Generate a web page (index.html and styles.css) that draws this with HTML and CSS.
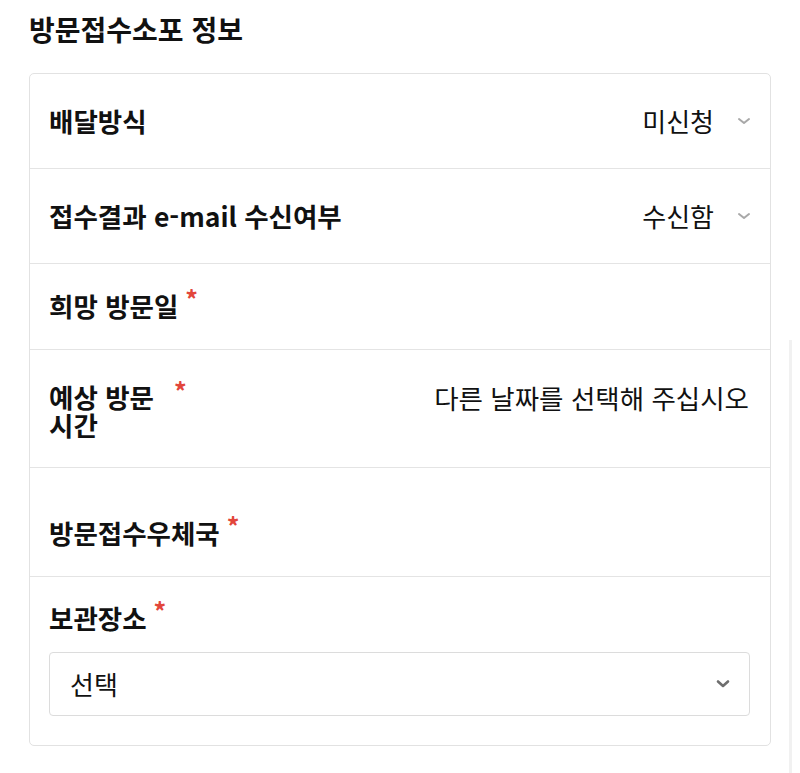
FILE: index.html
```html
<!DOCTYPE html>
<html lang="ko">
<head>
<meta charset="utf-8">
<link rel="stylesheet" href="styles.css">
</head>
<body>
<div class="page">
  <h2 class="title">방문접수소포 정보</h2>
  <div class="card">
    <div class="row row-a">
      <div class="label"><span class="label-text">배달방식</span></div>
      <div class="value">
        <span>미신청</span>
        <svg class="chev" width="14" height="8" viewBox="0 0 14 8"><path d="M2 2 L7 6 L12 2" fill="none" stroke="#a8a8a8" stroke-width="2" stroke-linecap="round" stroke-linejoin="round"/></svg>
      </div>
    </div>
    <div class="row row-a">
      <div class="label"><span class="label-text">접수결과 e-mail 수신여부</span></div>
      <div class="value">
        <span>수신함</span>
        <svg class="chev" width="14" height="8" viewBox="0 0 14 8"><path d="M2 2 L7 6 L12 2" fill="none" stroke="#a8a8a8" stroke-width="2" stroke-linecap="round" stroke-linejoin="round"/></svg>
      </div>
    </div>
    <div class="row row-b">
      <div class="label"><span class="label-text">희망 방문일</span><span class="req">*</span></div>
    </div>
    <div class="row row-c">
      <div class="label"><span class="label-text narrow">예상 방문 시간</span><span class="req">*</span></div>
      <div class="value plain">다른 날짜를 선택해 주십시오</div>
    </div>
    <div class="row row-d">
      <div class="label"><span class="label-text">방문접수우체국</span><span class="req">*</span></div>
    </div>
    <div class="row row-e">
      <div class="label"><span class="label-text">보관장소</span><span class="req">*</span></div>
      <div class="select">
        <span>선택</span>
        <svg class="sel-chev" width="16" height="10" viewBox="0 0 16 10"><path d="M3 2.5 L8 7 L13 2.5" fill="none" stroke="#6e6e6e" stroke-width="2.6" stroke-linecap="round" stroke-linejoin="round"/></svg>
      </div>
    </div>
  </div>
</div>
<div class="scroll-track"></div>
</body>
</html>
```

FILE: styles.css
```css
html, body {
  margin: 0;
  padding: 0;
  background: #ffffff;
}
body {
  font-family: "Noto Sans CJK KR", "Noto Sans", sans-serif;
  color: #111111;
  width: 800px;
  height: 773px;
  overflow: hidden;
}
.page {
  padding: 0 29px 0 29px;
}
.title {
  margin: 0;
  padding: 11px 0 0 0;
  font-size: 28px;
  line-height: 36px;
  font-weight: 700;
  height: 62px;
  box-sizing: border-box;
}
.card {
  border: 1px solid #e2e2e2;
  border-radius: 5px;
  margin-top: 11px;
}
.row {
  display: flex;
  justify-content: space-between;
  align-items: center;
  padding: 0 20px 0 19px;
  border-bottom: 1px solid #e4e4e4;
}
.row:last-child {
  border-bottom: none;
}
.row-a {
  padding-top: 32px;
  padding-bottom: 32px;
}
.row-b {
  padding-top: 27px;
  padding-bottom: 28px;
}
.row-c {
  align-items: flex-start;
  padding-top: 33px;
  padding-bottom: 28px;
}
.row-d {
  padding-top: 50px;
  padding-bottom: 28px;
}
.row-e {
  flex-direction: column;
  align-items: stretch;
  padding-top: 26px;
  padding-bottom: 29px;
}
.label {
  display: flex;
  align-items: flex-start;
  font-size: 26.5px;
  font-weight: 700;
  line-height: 30px;
}
.label-text.narrow {
  width: 118px;
  line-height: 28px;
}
.req {
  color: #e2463b;
  font-size: 25px;
  line-height: 22px;
  font-weight: 700;
  margin-left: 7px;
  margin-top: -4px;
}
.value {
  display: flex;
  align-items: center;
  font-size: 26px;
  line-height: 30px;
  font-weight: 400;
}
.value.plain {
  font-size: 26.5px;
  margin-right: 1px;
}
.chev {
  margin-left: 23px;
  margin-right: -1px;
}
.select {
  margin-top: 19px;
  height: 64px;
  box-sizing: border-box;
  border: 1px solid #dcdcdc;
  border-radius: 4px;
  display: flex;
  align-items: center;
  justify-content: space-between;
  padding: 0 18px 0 20px;
  font-size: 26px;
  line-height: 30px;
}
.scroll-track {
  position: absolute;
  left: 789px;
  top: 340px;
  width: 3px;
  height: 433px;
  background: #f1f1f1;
}
```
